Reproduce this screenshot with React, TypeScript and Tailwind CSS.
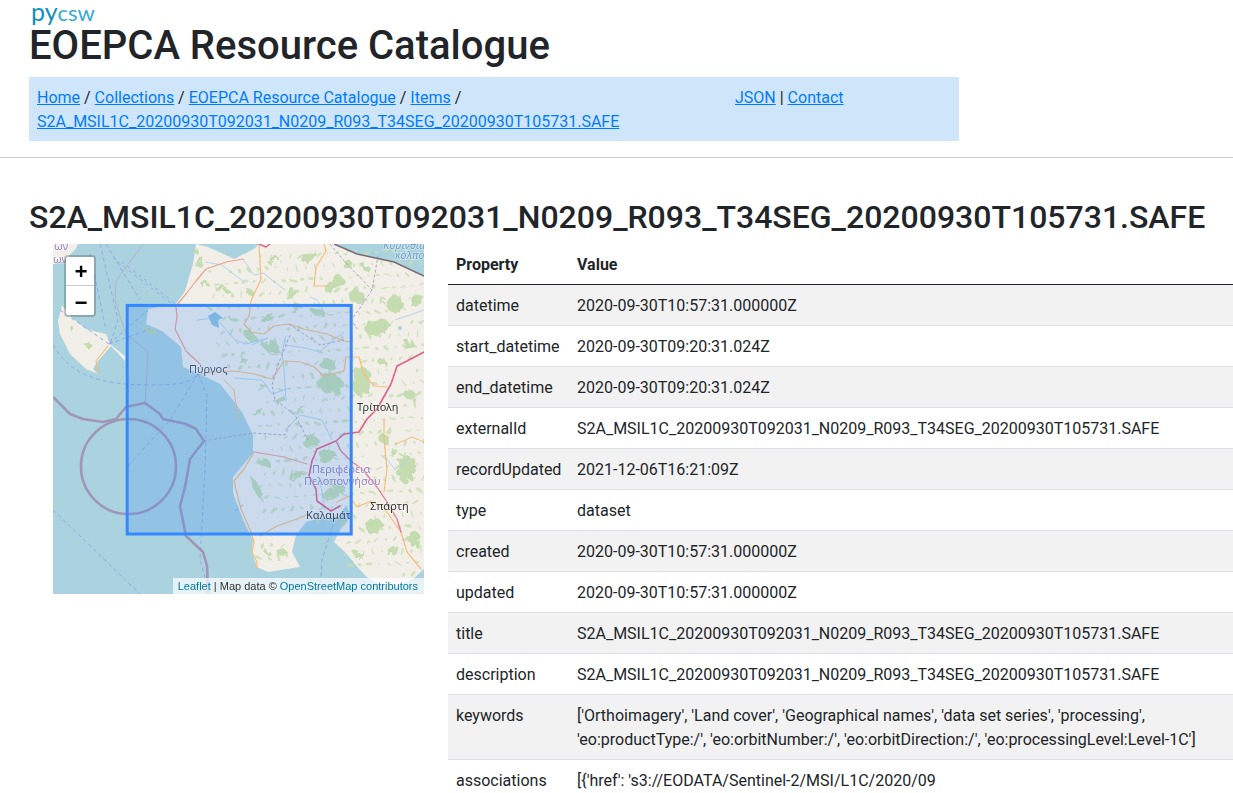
const TITLE = "S2A_MSIL1C_20200930T092031_N0209_R093_T34SEG_20200930T105731.SAFE";

const rows: [string, string][] = [
  ["datetime", "2020-09-30T10:57:31.000000Z"],
  ["start_datetime", "2020-09-30T09:20:31.024Z"],
  ["end_datetime", "2020-09-30T09:20:31.024Z"],
  ["externalId", TITLE],
  ["recordUpdated", "2021-12-06T16:21:09Z"],
  ["type", "dataset"],
  ["created", "2020-09-30T10:57:31.000000Z"],
  ["updated", "2020-09-30T10:57:31.000000Z"],
  ["title", TITLE],
  ["description", TITLE],
  [
    "keywords",
    "['Orthoimagery', 'Land cover', 'Geographical names', 'data set series', 'processing', 'eo:productType:/', 'eo:orbitNumber:/', 'eo:orbitDirection:/', 'eo:processingLevel:Level-1C']",
  ],
  ["associations", "[{'href': 's3://EODATA/Sentinel-2/MSI/L1C/2020/09"],
];

// forest patches: cx, cy, rx, ry, angle
const forest: number[][] = [
  [357, 297, 9, 7, 20], [377, 327, 12, 8, -20], [394, 304, 10, 8, 40], [334, 284, 11, 7, -30],
  [331, 384, 13, 10, 10], [361, 381, 9, 14, 10], [309, 257, 8, 4, -40], [274, 261, 6, 3, -30],
  [291, 294, 7, 3, -30], [271, 347, 9, 6, 30], [251, 337, 7, 4, 40], [327, 364, 8, 5, 0],
  [311, 442, 9, 7, 20], [327, 456, 9, 6, -20], [334, 492, 12, 6, -30], [384, 439, 6, 4, 0],
  [407, 469, 9, 14, 10], [374, 526, 8, 9, 30], [414, 539, 6, 8, 0], [264, 462, 7, 3, 10],
  [257, 489, 3, 12, -25], [297, 476, 8, 2, -40], [281, 552, 6, 3, 0], [267, 552, 4, 2, 30],
  [220, 288, 5, 3, -30], [205, 285, 4, 2, -40], [228, 292, 4, 2, 30], [296, 308, 6, 3, -30],
  [268, 318, 7, 3, -40], [250, 292, 4, 3, 30], [318, 312, 7, 4, 20], [280, 400, 6, 2, -30],
  [300, 410, 7, 2, -20], [258, 412, 6, 2, -30], [232, 318, 3, 2, 0], [243, 360, 4, 2, -30],
  [264, 386, 3, 2, 0], [348, 265, 5, 3, -40], [366, 268, 5, 3, 30], [416, 300, 8, 5, -30],
  [410, 395, 7, 5, 30], [408, 344, 6, 3, -30], [382, 362, 5, 3, 20], [392, 550, 7, 3, -30],
  [358, 555, 5, 4, 0], [345, 525, 5, 3, 20], [394, 452, 4, 3, 0], [150, 331, 8, 2, 20],
  [200, 262, 3, 6, 25], [88, 345, 3, 2, -30], [72, 329, 2, 3, 0], [195, 250, 2, 3, 0],
];

// thin scatter of small woods over the inland
const frac = (n: number) => n - Math.floor(n);
const specks: number[][] = [];
for (let i = 0; i < 620; i++) {
  const x = 190 + 234 * frac(i * 0.618034);
  const y = 250 + 325 * frac(i * 0.754878);
  const inland =
    (x > 258 && y < 520) || (x > 345 && y < 575) || (y > 262 && y < 300 && x > 205) || (y >= 300 && y < 370 && x > 200 + (y - 300) * 0.4) || (y > 535 && y < 565 && x > 258 && x < 290);
  if (inland) specks.push([x, y, 1.2 + (i % 5) * 0.7, 0.7 + (i % 3) * 0.4, (i * 37) % 180]);
}

const roads: [string, string, number][] = [
  ["#f5bd7c", "M259 244L261 279L251 301L249 316L244 324L251 332L264 334L274 326L289 324L304 329L327 334L344 341L351 342", 1.2],
  ["#f5bd7c", "M324 244L326 251L316 267L314 286L329 286", 1.2],
  ["#f5bd7c", "M200 374L214 372L234 371L254 374L272 379L284 361L301 362L314 367L324 376L344 371L346 357L359 357L364 374L374 386L387 387", 1.2],
  ["#f5bd7c", "M224 380L234 390L236 404L240 420", 1],
  ["#f5bd7c", "M254 452L244 469L234 481L241 509L251 532L254 542L252 552L257 562L257 568", 1.2],
  ["#f5bd7c", "M260 536L277 526L297 519L306 515", 1.2],
  ["#f5bd7c", "M337 502L349 496L357 507L371 501L384 508L401 532L407 552L421 569", 1.2],
  ["#f5bd7c", "M384 419L384 439L387 469L384 492", 1.2],
  ["#f5bd7c", "M98 373L96 361L108 346", 1.2],
  ["#f5bd7c", "M396 444L412 437L424 442", 1],
  ["#eaa18f", "M243 259L226 262L206 269L196 281L186 294L176 306L177 317L175 329L186 351L200 364", 1.2],
  ["#eaa18f", "M254 452L284 457L307 464", 1.2],
  ["#e2608c", "M424 352L407 361L397 366L391 384L377 409L367 419L359 432L344 434L336 441L317 449L312 461L309 476L316 489L317 501L331 511L340 506", 1.6],
  ["#e07a9c", "M336 441L341 451L351 461L362 469L377 487L387 502L397 519L401 532", 1.3],
  ["#e2608c", "M259 244L266 247L270 244", 1.4],
];

const rivers: string[] = [
  "M197 320L216 318L235 340L246 344L268 338L252 345",
  "M243 259L254 275L263 273L285 290",
  "M286 336L282 352L284 370L286 400",
  "M285 345L305 348L320 352L333 340L344 332",
  "M234 378L262 380L272 394L290 388",
  "M310 297L317 300L324 312",
  "M332 440L322 420L300 415L285 430",
  "M395 320L424 310",
  "M384 455L395 470L410 458",
  "M320 480L325 510",
  "M244 282L222 265L205 262",
];

function MapDrawing() {
  return (
    <svg viewBox="53 244 371 350" className="block w-[371px] h-[350px]">
      <defs>
        <filter id="woods" x="-5%" y="-5%" width="110%" height="110%">
          <feTurbulence type="fractalNoise" baseFrequency="0.14" numOctaves="2" seed="4" result="n" />
          <feDisplacementMap in="SourceGraphic" in2="n" scale="11" />
          <feGaussianBlur stdDeviation="0.5" />
        </filter>
        <filter id="rough" x="-5%" y="-5%" width="110%" height="110%">
          <feTurbulence type="fractalNoise" baseFrequency="0.08" numOctaves="2" seed="9" result="n" />
          <feDisplacementMap in="SourceGraphic" in2="n" scale="3" />
          <feGaussianBlur stdDeviation="0.35" />
        </filter>
        <clipPath id="kal">
          <rect x="53" y="244" width="298" height="350" />
        </clipPath>
      </defs>
      <rect x="53" y="244" width="371" height="350" fill="#aad3df" />
      {/* mainland */}
      <path
        d="M196 244L193 264L185 291L176 304L148 309L146 324L163 332L181 347L183 367L200 374L220 384L236 404L243 414L253 435L253 453L233 477L233 493L243 520L253 540L252 552L257 567L268 572L300 567L292 552L296 535L306 522L320 518L338 518L346 505L351 516L340 530L334 542L345 552L360 570L368 578L390 590L414 578L424 569L424 276L394 262L357 254L341 247L334 244L259 244L254 249L234 259L230 257L208 247Z"
        fill="#f2efe9"
      />
      {/* zakynthos, kefalonia */}
      <path
        d="M70 316L86 329L106 334L110 344L125 356L125 361L111 346L98 361L93 369L98 374L86 369L70 354L60 334L58 321L62 305Z"
        fill="#f2efe9"
      />
      <path d="M53 244L78 244L75 250L62 262L53 264Z" fill="#f2efe9" />
      <g filter="url(#woods)" fill="#bcd9a6" opacity="0.85">
        {forest.map(([cx, cy, rx, ry, a], i) => (
          <ellipse key={i} cx={cx} cy={cy} rx={rx} ry={ry} transform={`rotate(${a} ${cx} ${cy})`} />
        ))}
      </g>
      <g filter="url(#rough)" fill="#c6dfb2" opacity="0.8">
        {specks.map(([cx, cy, rx, ry, a], i) => (
          <ellipse key={i} cx={cx} cy={cy} rx={rx} ry={ry} transform={`rotate(${a} ${cx} ${cy})`} />
        ))}
      </g>
      {/* rivers and lake */}
      <g fill="none" stroke="#a9d2ea" strokeWidth="0.9">
        {rivers.map((d, i) => (
          <path key={i} d={d} />
        ))}
      </g>
      <path d="M208 316L215 312L223 318L218 320L219 328L212 325Z" fill="#8fc2dd" />
      <circle cx="400" cy="328" r="2" fill="#aad3df" />
      <path d="M146 324L163 332L170 336L160 330Z" fill="#a8cfa0" />
      <g fill="none" strokeLinejoin="round" strokeLinecap="round">
        {roads.map(([c, d, w], i) => (
          <path key={i} d={d} stroke={c} strokeWidth={w} />
        ))}
      </g>
      {/* maritime and admin lines */}
      <g fill="none" stroke="#8ea2ee" strokeWidth="0.9" strokeDasharray="4 3">
        <path d="M53 345C70 375 100 385 150 385C175 385 190 384 198 374" />
        <path d="M109 344L148 310M109 344L150 329M109 344L60 310" />
        <path d="M198 374L170 420L128 466" />
        <path d="M100 244L118 320L110 344M106 244L140 300M90 254L106 330" />
        <path d="M118 262L172 304M122 262L176 304" strokeDasharray="3 4" />
        <path d="M198 374L207 395L205 470L200 560L210 594" />
        <path d="M53 510L140 594" />
        <path d="M333 525L322 560L320 594" />
        <path d="M235 511L243 505" />
      </g>
      <g fill="none" stroke="#b3aebd" strokeWidth="0.9">
        <path d="M143 244L116 281L115 301L126 334L148 352L145 403" />
      </g>
      <g fill="none" stroke="#a9a0bb" strokeWidth="0.9" strokeDasharray="3 2">
        <path d="M204 441L253 433L285 435L290 424" />
        <path d="M290 335L278 365L272 385L275 400L295 415L308 440" />
        <path d="M330 244L345 262L372 290L378 256" />
        <path d="M289 324L320 345L344 340" />
        <path d="M372 290L360 308L351 320L358 330" />
      </g>
      <g fill="none" stroke="#a08fb3" strokeWidth="2.6" strokeLinejoin="round" opacity="0.9">
        <circle cx="128.5" cy="466.5" r="47.5" />
        <path d="M53 397L70 414L83 419L103 422L116 419L126 407L145 403L160 414L163 419L186 424L196 429L204 441L190 459L185 487L180 506L186 536L203 552L207 566L208 594" />
      </g>
      <path d="M334 244L341 247L357 254L394 262L424 276" fill="none" stroke="#7d6a72" strokeWidth="1.4" />
      {/* place labels */}
      <g className="font-['Noto_Sans',sans-serif]" fontSize="11" stroke="#ffffff" strokeOpacity="0.5" strokeWidth="1.5" paintOrder="stroke">
        <text x="189" y="373" fill="#4a4a52">Πύργος</text>
        <text x="357" y="411" fill="#333333">Τρίπολη</text>
        <text x="370" y="510" fill="#333333">Σπάρτη</text>
        <text x="306" y="519" fill="#333333" clipPath="url(#kal)">Καλαμάτα</text>
        <text x="312" y="473" fill="#9a84b8">Περιφέρεια</text>
        <text x="304" y="485" fill="#9a84b8">Πελοποννήσου</text>
        <text x="383" y="249" fill="#6a9fc4" fontStyle="italic">Κορινθιακός</text>
        <text x="395" y="259" fill="#6a9fc4" fontStyle="italic">κόλπος</text>
        <text x="54" y="250" fill="#9a84b8">ων</text>
        <text x="53" y="263" fill="#9a84b8">ων</text>
      </g>
      {/* product footprint */}
      <rect x="127.2" y="305.4" width="224" height="228.6" fill="#3388ff" fillOpacity="0.2" stroke="#3388ff" strokeWidth="3" />
    </svg>
  );
}

function LeafletMap() {
  return (
    <div className="relative w-[371px] h-[350px] overflow-hidden">
      <MapDrawing />
      <div className="absolute left-[11px] top-[11px] w-[32px] rounded border-2 border-black/20 bg-clip-padding">
        <div className="h-[29px] pt-[6px] pl-[2px] bg-white rounded-t-[2px] border-b border-[#ccc] flex items-center justify-center font-['Liberation_Mono',monospace] font-bold text-[22px] leading-none text-black">+</div>
        <div className="h-[29px] pt-[9px] pl-[2px] bg-white rounded-b-[2px] flex items-center justify-center font-['Liberation_Mono',monospace] font-bold text-[22px] leading-none text-black">−</div>
      </div>
      <div className="absolute right-0 bottom-0 pl-[5px] pr-[6px] bg-white/70 text-[11px] leading-[16px] text-[#333] font-['Liberation_Sans',sans-serif]">
        <span className="text-[#0078a8]">Leaflet</span> | Map data © <span className="text-[#0078a8]">OpenStreetMap contributors</span>
      </div>
    </div>
  );
}

export default function App() {
  return (
    <div className="h-[793px] overflow-hidden bg-white text-[#212529] text-base leading-6 font-['Roboto',sans-serif]">
      <header className="px-[29px]">
        <div className="h-[22px] pl-[2px] flex items-start">
          <span className="font-['Lato',sans-serif] leading-[22px]">
            <span className="text-[#0f8fbf] text-[25px]">py</span>
            <span className="text-[#37a9d6] text-[22px]">csw</span>
          </span>
        </div>
        <h1 className="text-[40px] leading-[48px] font-medium mb-[7px]">EOEPCA Resource Catalogue</h1>
        <nav className="w-[930px] bg-[#cfe6fa] pt-[9px] pb-[7px] px-2 flex">
          <div className="w-[698px] shrink-0">
            <a href="#" className="text-[#007bff] underline">Home</a> / <a href="#" className="text-[#007bff] underline">Collections</a> / <a href="#" className="text-[#007bff] underline">EOEPCA Resource Catalogue</a> / <a href="#" className="text-[#007bff] underline">Items</a> / <a href="#" className="text-[#007bff] underline">{TITLE}</a>
          </div>
          <div>
            <a href="#" className="text-[#007bff] underline">JSON</a> | <a href="#" className="text-[#007bff] underline">Contact</a>
          </div>
        </nav>
      </header>
      <hr className="mt-4 border-t border-[#c8c8c8]" />
      <main className="pl-[29px] mt-10">
        <h2 className="text-[32px] leading-[38px] font-medium mb-2 whitespace-nowrap">{TITLE}</h2>
        <div className="flex items-start">
          <div className="w-[419px] shrink-0 pl-6">
            <LeafletMap />
          </div>
          <table className="w-[785px] shrink-0 table-fixed border-separate border-spacing-0">
            <thead>
              <tr>
                <th className="w-[121px] px-2 pt-[9px] pb-[7px] text-left font-bold align-top border-b border-[#212529]">Property</th>
                <th className="px-2 pt-[9px] pb-[7px] text-left font-bold align-top border-b border-[#212529]">Value</th>
              </tr>
            </thead>
            <tbody>
              {rows.map(([name, value], i) => (
                <tr key={name} className={i % 2 === 0 ? "bg-[#f2f2f2]" : ""}>
                  <td className="px-2 pt-[9px] pb-[7px] border-b border-[#dee2e6] align-top whitespace-nowrap">{name}</td>
                  <td className="px-2 pt-[9px] pb-[7px] border-b border-[#dee2e6] align-top">{value}</td>
                </tr>
              ))}
            </tbody>
          </table>
        </div>
      </main>
    </div>
  );
}
